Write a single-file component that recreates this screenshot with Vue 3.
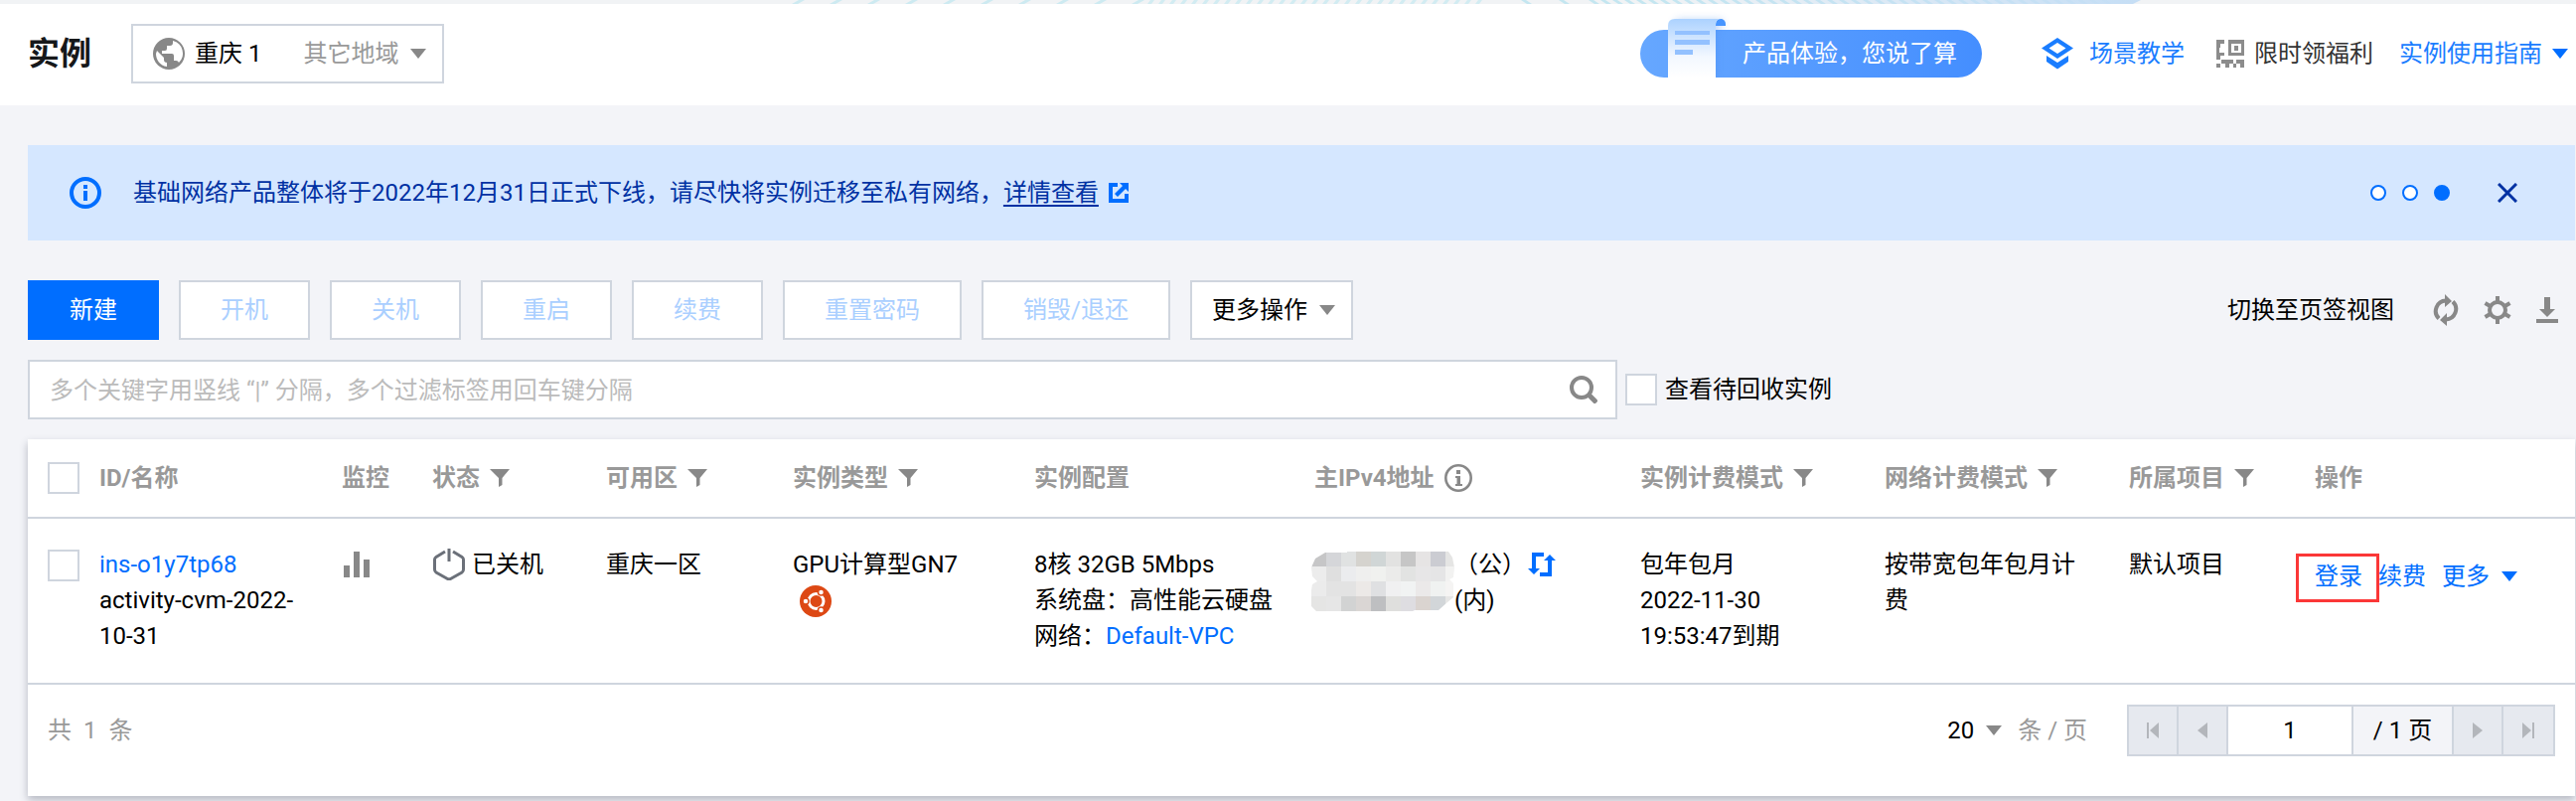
<script setup>
import { ref } from 'vue'

const disabledActions = ['开机', '关机', '重启', '续费', '重置密码', '销毁/退还']

const columns = [
  { title: 'ID/名称', width: 244 },
  { title: '监控', width: 91 },
  { title: '状态', width: 175, filter: true },
  { title: '可用区', width: 188, filter: true },
  { title: '实例类型', width: 243, filter: true },
  { title: '实例配置', width: 282 },
  { title: '主IPv4地址', width: 328, info: true },
  { title: '实例计费模式', width: 246, filter: true },
  { title: '网络计费模式', width: 246, filter: true },
  { title: '所属项目', width: 187, filter: true },
  { title: '操作', width: 282 }
]

const maskRows = [
  ['#c6c6c7', '#d5d6d9', '#e0e2e2', '#d5d3ce', '#d0d6d6', '#e2e2e1', '#c6c6c6', '#e6e4e4', '#cbccd2', '#e5e5e4'],
  ['#ececec', '#dfdfdf', '#ebecee', '#efefee', '#f0f1ef', '#ebebea', '#e2e3e2', '#e7e6e7', '#e5e5e6', '#f2f2f1'],
  ['#ebebeb', '#e3e3e3', '#e3e3e3', '#ece9e7', '#dfe0e2', '#f0f0f1', '#f1f3f3', '#ebe9e9', '#f0f2f1', '#f5f4f3'],
  ['#e5e5e4', '#e6e6e6', '#d2d3d3', '#dad6d4', '#bebfc1', '#dfdfdd', '#dedde1', '#dad4d0', '#d2d6d9', '#e6e6e5']
]

const sparseLines = Array.from({ length: 10 }, (_, i) => 4 + i * 38)
const denseLines = Array.from({ length: 31 }, (_, i) => 362 + i * 11)
const backLines = [738, 776, ...Array.from({ length: 44 }, (_, i) => 806 + i * 12)]

const keyword = ref('')
const showRecycled = ref(false)
const pageSize = ref('20')
const page = ref('1')
</script>

<template>
  <div class="page">
    <div class="strip">
      <svg class="strip-art" width="1362" height="4" viewBox="0 0 1362 4">
        <defs>
          <linearGradient id="stripFade" x1="0" x2="1" y1="0" y2="0">
            <stop offset="0" stop-color="#c5def5" stop-opacity="0" />
            <stop offset="1" stop-color="#c5def5" />
          </linearGradient>
        </defs>
        <path v-for="x in sparseLines" :key="'s' + x" :d="`M${x} 4l7-4h6l-7 4z`" fill="#cdeaf1" />
        <path v-for="x in denseLines" :key="'d' + x" :d="`M${x} 4l3-4h4l-3 4z`" fill="#d2ecf2" />
        <path v-for="x in backLines" :key="'b' + x" :d="`M${x} 0l6 4h5l-6-4z`" fill="#c4e6f0" />
        <path d="M860 0h502l-8 4H860z" fill="url(#stripFade)" />
      </svg>
    </div>

    <header class="header">
      <h1>实例</h1>
      <button class="region" type="button">
        <svg width="32" height="32" viewBox="0 0 32 32">
          <circle cx="16" cy="16" r="16" fill="#888" />
          <path d="M4 13l7 7v2a3 3 0 0 0 3 3v4C7 28 3 22 3 16zM20 3v2a3 3 0 0 1-3 3h-3v3a2 2 0 0 1-2 2H9v3h10a2 2 0 0 1 2 2v5h2a3 3 0 0 1 3 2A13 13 0 0 0 20 3z" fill="#fff" />
        </svg>
        <span class="region-name">重庆 1</span>
        <span class="region-other">其它地域</span>
        <i class="caret"></i>
      </button>

      <nav class="header-links">
        <a class="survey" href="#">
          <svg class="survey-paper" width="70" height="67" viewBox="0 0 70 67">
            <defs>
              <linearGradient id="paper" x1="0" x2="0" y1="0" y2="1">
                <stop offset="0" stop-color="#acd2ff" />
                <stop offset=".65" stop-color="#f3f8ff" />
                <stop offset="1" stop-color="#fff" />
              </linearGradient>
              <filter id="paperShade" x="-30%" y="-30%" width="160%" height="160%">
                <feGaussianBlur stdDeviation="4" />
              </filter>
            </defs>
            <path d="M16 9h47v8h-7v50H16z" fill="#3d7fe8" opacity=".35" filter="url(#paperShade)" />
            <path d="M56 15v-2a5 5 0 0 1 10 0v2z" fill="#4795ff" />
            <path d="M8 67V15q0-7 7-7h46q-5 0-5 7v52z" fill="url(#paper)" />
            <path d="M15 20h35v4H15zM15 29h35v5H15zM15 39h18v5H15z" fill="#93c1ff" />
          </svg>
          <span>产品体验，您说了算</span>
        </a>
        <a class="link scene" href="#">
          <svg width="32" height="32" viewBox="0 0 32 32" fill="#1a7dff">
            <path fill-rule="evenodd" d="M16 0l16 10.500L16 21 0 10.500zM16 5L7.500 10.500 16 16l8.500-5.500z" />
            <path d="M5 18l11 7 11-7v6l-11 7.500L5 24z" />
          </svg>
          场景教学
        </a>
        <a class="welfare" href="#">
          <svg width="28" height="28" viewBox="0 0 28 28" fill="#8c8c8c">
            <path fill-rule="evenodd" d="M12 0h16v16H12zM15 4v9h10V4zM18 6h4v5h-4z" />
            <path d="M0 0h8v4H4v4H0zM0 8h3v8H0zM3 13h5v3H3zM0 16h4v4H0zM5 20h4v4H4v4H0v-4h5zM9 20h8v4h-4v4H9zM20 20h8v8h-4v-4h-4zM17 24h3v4h-3z" />
          </svg>
          限时领福利
        </a>
        <a class="link guide" href="#">实例使用指南<i class="caret blue"></i></a>
      </nav>
    </header>

    <main class="main">
      <section class="notice">
        <svg width="32" height="32" viewBox="0 0 32 32" fill="#006eff">
          <circle cx="16" cy="16" r="14" fill="none" stroke="#006eff" stroke-width="4" />
          <path d="M14 8h4v4h-4zM14 14h4v10h-4z" />
        </svg>
        <p>基础网络产品整体将于2022年12月31日正式下线，请尽快将实例迁移至私有网络，<a href="#">详情查看</a></p>
        <svg width="20" height="20" viewBox="0 0 20 20" fill="#006eff">
          <path d="M0 0h9v4H4v12h12v-5h4v9H0z" />
          <path d="M11 0h9v9l-3-3-8 8-3-3 8-8z" />
        </svg>
        <div class="dots">
          <button type="button" aria-label="第 1 条"></button>
          <button type="button" aria-label="第 2 条"></button>
          <button type="button" class="on" aria-label="第 3 条"></button>
        </div>
        <button class="close" type="button" aria-label="关闭">
          <svg width="20" height="20" viewBox="0 0 20 20" stroke="#0031a3" stroke-width="3">
            <path d="M1 1l18 18M19 1L1 19" />
          </svg>
        </button>
      </section>

      <div class="toolbar">
        <button class="btn primary" type="button">新建</button>
        <button v-for="name in disabledActions" :key="name" class="btn" type="button" disabled>{{ name }}</button>
        <button class="btn more" type="button">更多操作<i class="caret"></i></button>
        <div class="tools">
          <a href="#">切换至页签视图</a>
          <button type="button" aria-label="刷新">
            <svg width="28" height="32" viewBox="0 0 28 32">
              <path d="M7 24.500A10.500 10.500 0 0 1 14 6.500M21 7.500a10.500 10.500 0 0 1-7 18" fill="none" stroke="#888" stroke-width="4" />
              <path d="M13 0l7 7-7 6zM15 19v13l-7-6z" fill="#888" />
            </svg>
          </button>
          <button type="button" aria-label="设置">
            <svg width="28" height="28" viewBox="0 0 28 28" stroke="#888" fill="none">
              <circle cx="14" cy="14" r="8" stroke-width="4" />
              <path d="M14 0v5M14 23v5M1.500 7l5 3M21.500 18l5 3M1.500 21l5-3M21.500 10l5-3" stroke-width="4" />
            </svg>
          </button>
          <button type="button" aria-label="下载">
            <svg width="24" height="28" viewBox="0 0 24 28" fill="#888">
              <path d="M9 1h6v12h5l-8 8-8-8h5zM1 23h22v4H1z" />
            </svg>
          </button>
        </div>
      </div>

      <div class="search-row">
        <div class="search">
          <input v-model="keyword" type="text" aria-label="搜索实例" placeholder="多个关键字用竖线 “|” 分隔，多个过滤标签用回车键分隔" />
          <button type="button" aria-label="搜索">
            <svg width="28" height="28" viewBox="0 0 28 28" fill="none" stroke="#888" stroke-width="4">
              <circle cx="12" cy="12" r="10" />
              <path d="M19 19l8 8" stroke-width="5" />
            </svg>
          </button>
        </div>
        <label class="recycled"><input v-model="showRecycled" type="checkbox" />查看待回收实例</label>
      </div>

      <section class="card">
        <table>
          <colgroup>
            <col width="52" />
            <col v-for="c in columns" :key="c.title" :width="c.width" />
          </colgroup>
          <thead>
            <tr>
              <th class="check"><input type="checkbox" aria-label="全选" /></th>
              <th v-for="c in columns" :key="c.title">
                <div class="th">
                  {{ c.title }}
                  <svg v-if="c.filter" width="20" height="20" viewBox="0 0 20 20" fill="#888">
                    <path d="M0 1h20l-7.500 9v7l-3.500 2v-9z" />
                  </svg>
                  <svg v-if="c.info" width="28" height="28" viewBox="0 0 28 28" fill="#888">
                    <circle cx="14" cy="14" r="12.700" fill="none" stroke="#888" stroke-width="2.600" />
                    <path d="M12 6h4v4h-4zM11 12h5v8h2v2h-7v-2h1.500v-6H11z" />
                  </svg>
                </div>
              </th>
            </tr>
          </thead>
          <tbody>
            <tr>
              <td class="check"><input type="checkbox" aria-label="选择 ins-o1y7tp68" /></td>
              <td><a href="#">ins-o1y7tp68</a><br />activity-cvm-2022-10-31</td>
              <td>
                <a class="monitor" href="#" aria-label="监控">
                  <svg width="30" height="26" viewBox="0 0 30 26" fill="#888">
                    <path d="M2 14h6v12H2zM12 0h6v26h-6zM22 8h6v18h-6z" />
                  </svg>
                </a>
              </td>
              <td>
                <span class="status">
                  <svg width="34" height="32" viewBox="0 0 34 32" fill="none" stroke="#6b7079" stroke-width="3">
                    <path d="M13 3L4 8.500Q2.500 9.500 2.500 11v10q0 2 1.500 3l11.500 6.500q1.500.7 3 0L30 24q1.500-1 1.500-3V11q0-1.500-1.500-2.500L21 3M17 0v13" />
                  </svg>
                  已关机
                </span>
              </td>
              <td>重庆一区</td>
              <td>
                GPU计算型GN7
                <svg class="ubuntu" width="32" height="32" viewBox="0 0 32 32">
                  <circle cx="16" cy="16" r="16" fill="#dd4814" />
                  <circle cx="16.500" cy="16" r="7.500" fill="none" stroke="#fff" stroke-width="3" />
                  <g stroke="#dd4814" stroke-width="1.500" fill="#fff">
                    <circle cx="6" cy="16" r="3" />
                    <circle cx="21.500" cy="7" r="3" />
                    <circle cx="21.500" cy="25" r="3" />
                  </g>
                </svg>
              </td>
              <td>8核 32GB 5Mbps<br />系统盘：高性能云硬盘<br />网络：<a href="#">Default-VPC</a></td>
              <td>
                <div class="ip">
                  <svg width="144" height="60" viewBox="0 0 144 60" shape-rendering="crispEdges">
                    <clipPath id="maskShape">
                      <path d="M14 1h22V0h102l4 6 2 10-1 10-4 2 4 4v14l-6 5-9 8h-24l-2 1H5l-5-5V39l1-6 5-3-5-5-1-9 4-9z" />
                    </clipPath>
                    <g clip-path="url(#maskShape)">
                      <template v-for="(row, r) in maskRows" :key="r">
                        <rect v-for="(color, c) in row" :key="c" :x="c * 15" :y="r * 15" width="15" height="15" :fill="color" />
                      </template>
                    </g>
                  </svg>
                  <div>
                    （公）<a class="swap" href="#" aria-label="转换公网 IP"><svg width="28" height="24" viewBox="0 0 28 24" fill="#006eff">
                      <path d="M4 0h12v4H8v12h4l-6 6-6-6h4zM24 24H12v-4h8V8h-4l6-6 6 6h-4z" />
                    </svg></a><br />(内)
                  </div>
                </div>
              </td>
              <td>包年包月<br />2022-11-30 19:53:47到期</td>
              <td>按带宽包年包月计费</td>
              <td>默认项目</td>
              <td>
                <div class="ops">
                  <a class="marked" href="#">登录</a>
                  <a href="#">续费</a>
                  <a href="#">更多<i class="caret blue"></i></a>
                </div>
              </td>
            </tr>
          </tbody>
        </table>

        <footer class="footer">
          <div class="total"><span>共</span><span>1</span><span>条</span></div>
          <label class="size">
            <select v-model="pageSize">
              <option>20</option>
              <option>50</option>
            </select>
            <i class="caret"></i>
            <span>条 / 页</span>
          </label>
          <div class="pager">
            <button type="button" disabled aria-label="首页">
              <svg width="14" height="16" viewBox="0 0 14 16" fill="#b3b6bb"><path d="M1 0h2v16H1zM13 0v16L4 8z" /></svg>
            </button>
            <button type="button" disabled aria-label="上一页">
              <svg width="14" height="16" viewBox="0 0 14 16" fill="#b3b6bb"><path d="M12 0v16L2 8z" /></svg>
            </button>
            <input v-model="page" type="text" aria-label="页码" />
            <span>/ 1 页</span>
            <button type="button" disabled aria-label="下一页">
              <svg width="14" height="16" viewBox="0 0 14 16" fill="#b3b6bb"><path d="M2 0v16l10-8z" /></svg>
            </button>
            <button type="button" disabled aria-label="末页">
              <svg width="14" height="16" viewBox="0 0 14 16" fill="#b3b6bb"><path d="M11 0h2v16h-2zM1 0v16l9-8z" /></svg>
            </button>
          </div>
        </footer>
      </section>
    </main>
  </div>
</template>

<style>
body {
  margin: 0;
  background: #f3f4f8;
}
</style>

<style scoped>
.page {
  font-family: Roboto, 'Noto Sans CJK SC', sans-serif;
  font-size: 24px;
  line-height: 36px;
  color: #000;
}
.page * {
  box-sizing: border-box;
}
button,
input,
select {
  font: inherit;
  color: inherit;
  margin: 0;
  padding: 0;
  border: 0;
  border-radius: 0;
  background: none;
}
svg {
  display: block;
  flex: none;
}
a {
  color: #006eff;
  text-decoration: none;
}
.caret {
  flex: none;
  border: 8px solid transparent;
  border-top: 10px solid #888;
  border-bottom: 0;
}
.caret.blue {
  border-top-color: #006eff;
}

.strip {
  display: flex;
  justify-content: flex-end;
  height: 4px;
  padding-right: 438px;
  overflow: hidden;
  background: #f1f3f5;
}
.header {
  display: flex;
  align-items: center;
  height: 102px;
  padding: 0 8px 2px 28px;
  background: #fff;
}
h1 {
  margin: 0 40px 0 0;
  font-size: 32px;
  line-height: 48px;
  color: #16181a;
}
.region {
  display: flex;
  align-items: center;
  height: 60px;
  padding: 0 16px 0 20px;
  border: 2px solid #cfd5de;
}
.region-name {
  margin: 0 42px 0 10px;
}
.region-other {
  margin-right: 12px;
  color: #999;
}
.header-links {
  display: flex;
  align-items: center;
  margin-left: auto;
  white-space: nowrap;
}
.header-links .link {
  color: #1a7dff;
}
.survey {
  position: relative;
  width: 344px;
  height: 48px;
  margin-right: 60px;
  padding-left: 103px;
  border-radius: 24px;
  background: linear-gradient(90deg, #66a7ff, #448eff);
  line-height: 48px;
  color: #fff;
}
.survey-paper {
  position: absolute;
  left: 20px;
  bottom: 0;
}
.scene,
.welfare,
.guide {
  display: flex;
  align-items: center;
}
.scene {
  gap: 16px;
  margin-right: 32px;
}
.welfare {
  gap: 10px;
  margin-right: 26px;
  color: #333;
}
.guide {
  gap: 10px;
}

.main {
  padding: 40px 1px 5px 28px;
}
.notice {
  display: flex;
  align-items: center;
  height: 96px;
  padding: 0 58px 0 42px;
  background: #d5e7ff;
  color: #0031a3;
}
.notice p {
  margin: 0 10px 0 32px;
}
.notice p a {
  color: inherit;
  text-decoration: underline;
  text-underline-offset: 4px;
  text-decoration-thickness: 2px;
}
.dots {
  display: flex;
  gap: 16px;
  margin-left: auto;
}
.dots button {
  width: 16px;
  height: 16px;
  border: 2px solid #006eff;
  border-radius: 50%;
  background: #fff;
}
.dots .on {
  background: #006eff;
}
.close {
  margin-left: 48px;
}

.toolbar {
  display: flex;
  align-items: center;
  gap: 20px;
  margin-top: 40px;
}
.btn {
  min-width: 132px;
  height: 60px;
  padding: 0 40px;
  border: 2px solid #cfd5de;
  background: #fff;
}
.btn:disabled {
  color: #aacfff;
}
.btn.primary {
  border-color: #006eff;
  background: #006eff;
  color: #fff;
}
.btn.more {
  display: flex;
  align-items: center;
  gap: 12px;
  padding: 0 16px 0 20px;
}
.tools {
  display: flex;
  align-items: center;
  gap: 24px;
  margin-left: auto;
  padding-right: 16px;
}
.tools a {
  margin-right: 14px;
  color: #000;
}

.search-row {
  display: flex;
  align-items: center;
  gap: 8px;
  margin: 20px 0;
}
.search {
  display: flex;
  align-items: center;
  width: 1600px;
  height: 60px;
  padding: 0 18px 0 20px;
  border: 2px solid #cfd5de;
  background: #fff;
}
.search input {
  flex: 1;
  height: 56px;
  padding-top: 2px;
  outline: 0;
}
.search input::placeholder {
  color: #bbb;
  opacity: 1;
}
.recycled {
  display: flex;
  align-items: center;
  gap: 8px;
}
input[type='checkbox'] {
  display: block;
  width: 32px;
  height: 32px;
  border: 2px solid #cfd5de;
  background: #fff;
  appearance: none;
}

.card {
  background: #fff;
  box-shadow: 0 4px 8px rgba(54, 58, 80, 0.32);
}
table {
  width: 100%;
  border-collapse: separate;
  border-spacing: 0;
  table-layout: fixed;
}
th,
td {
  padding: 0 20px;
  border-bottom: 2px solid #cfd5de;
  text-align: left;
}
th {
  height: 80px;
  font-weight: 700;
  color: #999;
}
td {
  padding-top: 28px;
  padding-bottom: 29px;
  vertical-align: top;
}
.check {
  padding-right: 0;
}
td.check {
  padding-top: 31px;
}
.th {
  display: flex;
  align-items: center;
  gap: 10px;
  white-space: nowrap;
}
.monitor {
  display: block;
  padding-top: 5px;
}
.status {
  display: flex;
  align-items: center;
  gap: 6px;
}
.ubuntu {
  margin: 3px 0 0 7px;
}
.ip {
  display: flex;
  align-items: flex-start;
  margin-left: -3px;
  white-space: nowrap;
}
.ip > svg {
  margin-top: 5px;
}
.swap {
  display: inline-block;
  margin-left: 2px;
  vertical-align: -4px;
}
.ops {
  display: flex;
  gap: 16px;
  padding-top: 12px;
  white-space: nowrap;
}
.ops .caret {
  display: inline-block;
  margin-left: 12px;
  vertical-align: 3px;
}
.marked {
  position: relative;
}
.marked::after {
  content: '';
  position: absolute;
  inset: -5px -17px -8px -19px;
  border: 3px solid #fb3737;
}

.footer {
  display: flex;
  align-items: center;
  height: 112px;
  padding: 0 20px 20px;
}
.total {
  display: flex;
  gap: 12px;
  color: #999;
}
.size {
  display: flex;
  align-items: center;
  gap: 12px;
  margin: 0 40px 0 auto;
}
.size select {
  appearance: none;
}
.size span {
  margin-left: 4px;
  color: #999;
}
.pager {
  display: flex;
  height: 52px;
  border: 2px solid #cfd5de;
}
.pager > * {
  display: flex;
  align-items: center;
  justify-content: center;
  width: 50px;
  border-right: 2px solid #cfd5de;
  background: #e6e9ef;
}
.pager > :last-child {
  border-right: 0;
}
.pager input {
  width: 126px;
  background: #fff;
  text-align: center;
}
.pager span {
  width: 101px;
  background: #f3f4f8;
}
</style>
